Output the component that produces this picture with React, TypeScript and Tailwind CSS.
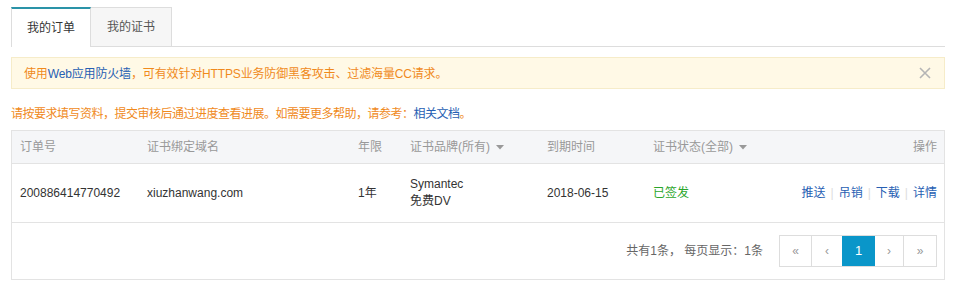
import React from "react";

const font = { fontFamily: '"Liberation Sans", "Noto Sans CJK SC", sans-serif' };
const cjk = { fontFamily: '"Noto Sans CJK SC", sans-serif' };

function Caret() {
  return (
    <svg width="8" height="5" viewBox="0 0 8 5" className="ml-[6px] inline-block">
      <path d="M0 0 L8 0 L4 4.5 Z" fill="#999" />
    </svg>
  );
}

export default function App() {
  return (
    <div className="w-[957px] h-[288px] bg-white pl-[11px] pr-[12px] pt-[7px] text-[12px] text-[#333]" style={font}>
      {/* Tabs */}
      <div className="flex h-[40px] border-b border-[#ddd]">
        <div className="w-[80px] h-[40px] border-t-2 border-t-[#2a93a8] border-l border-r border-[#ddd] bg-white flex items-center justify-center text-[#333] -mb-px">
          我的订单
        </div>
        <div className="w-[81px] h-[39px] border-t border-r border-[#ddd] bg-[#f6f6f6] flex items-center justify-center text-[#555]">
          我的证书
        </div>
      </div>

      {/* Alert */}
      <div className="mt-[10px] h-[32px] bg-[#fff9e6] border border-[#f6ecc9] flex items-center justify-between pl-[12px] pr-[13px]">
        <span className="text-[#f08a1c] tracking-[-0.15px]">
          使用<span className="text-[#2760b3]">Web应用防火墙</span><span style={cjk}>，</span>可有效针对HTTPS业务防御黑客攻击<span style={cjk}>、</span>过滤海量CC请求<span style={cjk}>。</span>
        </span>
        <svg width="12" height="12" viewBox="0 0 12 12">
          <path d="M1 1 L11 11 M11 1 L1 11" stroke="#b5b5b5" strokeWidth="1.6" />
        </svg>
      </div>

      {/* Info line */}
      <div className="mt-[15px] h-[18px] leading-[18px] text-[#f08a1c] tracking-[-0.5px]" style={cjk}>
        请按要求填写资料，提交审核后通过进度查看进展。如需要更多帮助，请参考：<span className="text-[#2760b3]">相关文档</span>。
      </div>

      {/* Table */}
      <div className="mt-[8px] border border-[#e3e3e3]">
        <div className="grid grid-cols-[127px_211px_52px_137px_106px_1fr_auto] h-[33px] items-center bg-[#f5f6f8] border-b border-[#e3e3e3] text-[#999]">
          <div className="pl-[8px]">订单号</div>
          <div className="pl-[8px]">证书绑定域名</div>
          <div className="pl-[8px]">年限</div>
          <div className="pl-[8px] flex items-center">证书品牌(所有)<Caret /></div>
          <div className="pl-[8px]">到期时间</div>
          <div className="pl-[8px] flex items-center">证书状态(全部)<Caret /></div>
          <div className="pr-[7px] text-right">操作</div>
        </div>
        <div className="grid grid-cols-[127px_211px_52px_137px_106px_1fr_auto] h-[59px] items-center border-b border-[#e3e3e3] text-[#333]">
          <div className="pl-[8px]">200886414770492</div>
          <div className="pl-[8px]">xiuzhanwang.com</div>
          <div className="pl-[8px]">1年</div>
          <div className="pl-[8px] leading-[17px]">
            <div>Symantec</div>
            <div>免费DV</div>
          </div>
          <div className="pl-[8px]">2018-06-15</div>
          <div className="pl-[8px] text-[#2aa52a]">已签发</div>
          <div className="pr-[7px] flex items-center text-[#2760b3]">
            <span>推送</span>
            <span className="mx-[5px] text-[#ddd]">|</span>
            <span>吊销</span>
            <span className="mx-[5px] text-[#ddd]">|</span>
            <span>下载</span>
            <span className="mx-[5px] text-[#ddd]">|</span>
            <span>详情</span>
          </div>
        </div>
        <div className="h-[56px] flex items-center justify-end pr-[7px]">
          <span className="text-[#666] mr-[16px]">共有1条， 每页显示：1条</span>
          <div className="flex h-[32px] border border-[#ddd] text-[#999]">
            <div className="w-[32px] flex items-center justify-center border-r border-[#ddd]">«</div>
            <div className="w-[30px] flex items-center justify-center">‹</div>
            <div className="w-[33px] flex items-center justify-center bg-[#0a96c9] text-white text-[13px]">1</div>
            <div className="w-[29px] flex items-center justify-center border-r border-[#ddd]">›</div>
            <div className="w-[32px] flex items-center justify-center">»</div>
          </div>
        </div>
      </div>
    </div>
  );
}
